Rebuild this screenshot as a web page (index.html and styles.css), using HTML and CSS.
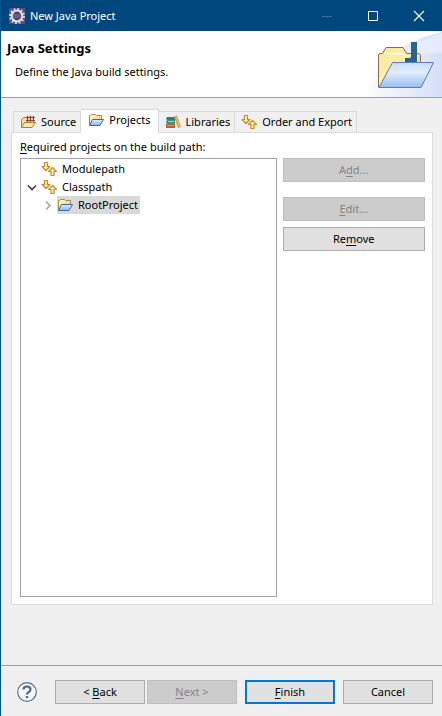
FILE: index.html
```html
<!DOCTYPE html>
<html lang="en">
<head>
<meta charset="utf-8">
<title>New Java Project</title>
<link rel="stylesheet" href="styles.css">
</head>
<body>
<svg class="defs" aria-hidden="true">
  <defs>
    <linearGradient id="gold" x1="0" y1="0" x2="1" y2="1"><stop offset="0" stop-color="#fffbe0"/><stop offset="1" stop-color="#efc65c"/></linearGradient>
    <linearGradient id="blue" x1="0" y1="0" x2="0" y2="1"><stop offset="0" stop-color="#e4f1fe"/><stop offset="1" stop-color="#86b3ee"/></linearGradient>
    <symbol id="arrows" viewBox="0 0 16 16">
      <g fill="#fff0b8" stroke="#c68d20" stroke-width="1.200" stroke-linejoin="round">
        <path d="M3.500 1.500h3v4H9L5 9.500 1 5.500h2.500z"/>
        <path d="M11.500 6.500l4 4H13v4h-3v-4H7.500z"/>
      </g>
    </symbol>
    <symbol id="folder" viewBox="0 0 16 16">
      <path d="M1.500 13V3.500h1l1-1h4l1 1h5V7" fill="url(#gold)" stroke="#b38a3c"/>
      <path d="M4.500 7.500h11l-3.500 6H1.500z" fill="url(#blue)" stroke="#4068b4" stroke-linejoin="round"/>
    </symbol>
  </defs>
</svg>
<div class="window">
  <header class="titlebar">
    <svg class="app-icon" viewBox="0 0 16 16" aria-hidden="true">
      <rect width="16" height="16" fill="#5a4a86"/>
      <circle cx="8" cy="8" r="7" fill="none" stroke="#d8d4d4" stroke-width="2" stroke-dasharray="2 1.660"/>
      <circle cx="8" cy="8" r="5.300" fill="#4b4470" stroke="#eeeae6" stroke-width="1.800"/>
      <path d="M4 7h8M4 9h8" stroke="#8279ac"/>
    </svg>
    <h1 class="window-title">New Java Project</h1>
    <button class="window-button" disabled aria-label="Minimize"><svg viewBox="0 0 12 12"><path d="M1 6.500h10" stroke="#37719f"/></svg></button>
    <button class="window-button" aria-label="Maximize"><svg viewBox="0 0 12 12"><path d="M1.500 1.500h9v9h-9z" fill="none" stroke="#fff"/></svg></button>
    <button class="window-button" aria-label="Close"><svg viewBox="0 0 12 12"><path d="M1 1l10 10M11 1L1 11" stroke="#fff" stroke-width="1.200"/></svg></button>
  </header>
  <section class="banner">
    <div class="banner-text">
      <h2>Java Settings</h2>
      <p>Define the Java build settings.</p>
    </div>
    <svg class="banner-art" viewBox="0 0 75 66" aria-hidden="true">
      <defs>
        <linearGradient id="haze" x1="0" y1="0" x2="1" y2="0"><stop offset="0" stop-color="#fbfcff"/><stop offset="1" stop-color="#d6dff7"/></linearGradient>
        <linearGradient id="case" x1="0" y1="0" x2="1" y2="1"><stop offset="0" stop-color="#f8e698"/><stop offset=".5" stop-color="#fcefae"/><stop offset="1" stop-color="#dcae4e"/></linearGradient>
        <linearGradient id="front" x1="0" y1="0" x2="0" y2="1"><stop offset="0" stop-color="#c8dcf8"/><stop offset=".4" stop-color="#e2edff"/><stop offset="1" stop-color="#98bdf2"/></linearGradient>
      </defs>
      <path d="M0 66C5 37 27 12 75 1v65z" fill="url(#haze)"/>
      <path d="M43 19Q57 7 75 2V22Q58 20 43 29z" fill="#e9effc" opacity=".7"/>
      <path d="M11.500 56.500v-32q0-2 2-2h2l3.500-6h17l3.500 6h12q2 0 2 2v10" fill="url(#case)" stroke="#8a6a50"/>
      <path d="M17 22.500h21" stroke="#fff8d0" stroke-width="2"/>
      <path d="M44 11h6v22H38v-6h5q1 0 1-2z" fill="#28638f"/>
      <path d="M25.500 31.500h41L54 56.500H12z" fill="url(#front)" stroke="#5f78c0" stroke-linejoin="round"/>
    </svg>
  </section>
  <main class="content">
    <div class="tabs" role="tablist">
      <button class="tab" role="tab" aria-selected="false">
        <svg class="icon" viewBox="0 0 16 16" aria-hidden="true"><path d="M1.500 13V5.500l2-2h4v3h6V9" fill="#f8dc98" stroke="#b17b38"/><path d="M4.500 8.500h11L12 13.500H1.500z" fill="#ffe7a8" stroke="#b17b38" stroke-linejoin="round"/><path d="M6.500 1.500h7v6h-7z" fill="#e3cbb0"/><path d="M6 3.500h9M6 6.500h9M7.500 2v6M10.500 2v6M13.500 2v6" stroke="#7b4b3e"/></svg>
        Source</button>
      <button class="tab tab-active" role="tab" aria-selected="true">
        <svg class="icon" aria-hidden="true"><use href="#folder"/></svg>
        Projects</button>
      <button class="tab" role="tab" aria-selected="false">
        <svg class="icon" viewBox="0 0 16 16" aria-hidden="true"><path d="M2 3h8v3H2L1 4.500z" fill="#287b9b"/><path d="M2 6h8v4H2L1 8z" fill="#2a9c78"/><path d="M3 7.500h6" stroke="#9bd8bd"/><path d="M1 10h9v4H1z" fill="#b56134"/><path d="M2 11.500h7" stroke="#da986d"/><path d="M9 2.500l3-1L16 13l-3 1z" fill="#e19a3c"/><path d="M11 3l3.500 10" stroke="#f4c36c"/></svg>
        Libraries</button>
      <button class="tab" role="tab" aria-selected="false">
        <svg class="icon" aria-hidden="true"><use href="#arrows"/></svg>
        Order and Export</button>
    </div>
    <section class="panel" role="tabpanel">
      <p class="panel-label" id="tree-label"><u>R</u>equired projects on the build path:</p>
      <div class="panel-body">
        <ul class="tree" role="tree" aria-labelledby="tree-label">
          <li class="row" role="treeitem"><span class="twisty"></span><svg class="icon" aria-hidden="true"><use href="#arrows"/></svg><span class="name">Modulepath</span></li>
          <li class="row" role="treeitem" aria-expanded="true"><svg class="twisty" viewBox="0 0 16 16" aria-hidden="true"><path d="M4 6.500l4 4 4-4" fill="none" stroke="#404040" stroke-width="1.600"/></svg><svg class="icon" aria-hidden="true"><use href="#arrows"/></svg><span class="name">Classpath</span></li>
          <li class="row row-child" role="treeitem" aria-expanded="false" aria-selected="true"><svg class="twisty" viewBox="0 0 16 16" aria-hidden="true"><path d="M6 4.500l4 4-4 4" fill="none" stroke="#a6a6a6" stroke-width="1.600"/></svg><span class="selected"><svg class="icon" aria-hidden="true"><use href="#folder"/></svg><span class="name">RootProject</span></span></li>
        </ul>
        <div class="actions">
          <button class="button button-add" disabled>A<u>d</u>d...</button>
          <button class="button" disabled><u>E</u>dit...</button>
          <button class="button">Re<u>m</u>ove</button>
        </div>
      </div>
    </section>
  </main>
  <footer class="footer">
    <button class="help" aria-label="Help"><svg viewBox="0 0 20 20"><circle cx="10" cy="10" r="9.300" fill="#f6f7fa" stroke="#5b6d92" stroke-width="1.200"/><path d="M6.500 7.500Q6.500 4.500 10 4.500t3.500 3q0 1.500-2 2.700-1.500.8-1.500 2.300" fill="none" stroke="#53658c" stroke-width="2.200"/><path d="M8.800 14h2.400v2.200H8.800z" fill="#53658c"/></svg></button>
    <div class="step-buttons">
      <button class="button">&lt; <u>B</u>ack</button>
      <button class="button" disabled><u>N</u>ext &gt;</button>
    </div>
    <button class="button button-default"><u>F</u>inish</button>
    <button class="button">Cancel</button>
  </footer>
</div>
</body>
</html>
```
FILE: styles.css
```css
* {
  box-sizing: border-box;
}

body {
  margin: 0;
  font: 11px/16px "Noto Sans", "Open Sans", sans-serif;
  color: #000;
  background: #f0f0f0;
}

h1, h2, p, ul {
  margin: 0;
  padding: 0;
}

button {
  font: inherit;
  color: inherit;
  padding: 0;
}

u {
  text-underline-offset: 2px;
}

.defs {
  position: absolute;
  width: 0;
  height: 0;
}

.icon {
  flex: none;
  width: 16px;
  height: 16px;
}

.window {
  display: flex;
  flex-direction: column;
  min-height: 100vh;
  border-left: 1px solid #005499;
}

.titlebar {
  display: flex;
  align-items: center;
  height: 31px;
  padding-left: 8px;
  color: #fff;
  background: #00477e;
}

.app-icon {
  width: 16px;
  height: 16px;
}

.window-title {
  flex: 1;
  margin-left: 5px;
  font-size: 11px;
  font-weight: 400;
}

.window-button {
  display: grid;
  place-items: center;
  width: 46px;
  height: 31px;
  border: 0;
  background: none;
}

.window-button svg {
  width: 12px;
  height: 12px;
}

.banner {
  display: flex;
  justify-content: space-between;
  height: 67px;
  background: #fff;
  border-bottom: 1px solid #a0a0a0;
}

.banner-text {
  padding: 9px 6px;
}

.banner-text h2 {
  font-size: 13px;
  line-height: 16px;
}

.banner-text p {
  margin: 8px 8px 0;
}

.banner-art {
  width: 75px;
  height: 66px;
}

.content {
  display: flex;
  flex: 1;
  flex-direction: column;
  padding: 11px 9px 60px 10px;
}

.tabs {
  display: flex;
  align-items: flex-end;
  padding-left: 2px;
}

.tab {
  display: flex;
  align-items: center;
  gap: 5px;
  height: 21px;
  padding: 0 4px 0 6px;
  border: 1px solid #d9d9d9;
  border-bottom: 0;
  border-left-width: 0;
  background: #f0f0f0;
  white-space: nowrap;
}

.tab:first-child {
  border-left-width: 1px;
}

.tab-active {
  z-index: 1;
  height: 24px;
  margin-bottom: -1px;
  padding: 0 7px 4px;
  background: #fff;
}

.panel {
  display: flex;
  flex: 1;
  flex-direction: column;
  padding: 6px 7px 7px 8px;
  border: 1px solid #dcdcdc;
  background: #fff;
}

.panel-body {
  display: grid;
  grid-template-columns: 9fr 5fr;
  flex: 1;
  gap: 6px;
  margin-top: 3px;
}

.tree {
  padding: 1px 3px;
  border: 1px solid #a0a3a8;
  list-style: none;
}

.row {
  display: flex;
  align-items: center;
  height: 18px;
}

.row-child {
  padding-left: 16px;
}

.twisty {
  width: 16px;
  height: 16px;
  margin-right: 1px;
}

.name {
  margin-left: 5px;
}

.selected {
  display: flex;
  align-items: center;
  height: 18px;
  padding-right: 2px;
  background: #d9d9d9;
}

.button {
  display: block;
  width: 100%;
  height: 24px;
  border: 1px solid #adadad;
  background: #e1e1e1;
}

.button:disabled {
  color: #838383;
  border-color: #bfbfbf;
  background: #ccc;
}

.actions .button {
  margin-bottom: 6px;
}

.actions .button-add {
  margin-bottom: 15px;
}

.footer {
  display: flex;
  align-items: center;
  gap: 8px;
  height: 51px;
  padding: 2px 9px 0 16px;
  border-top: 1px solid #a0a0a0;
}

.footer .button {
  width: 90px;
}

.step-buttons {
  display: flex;
  gap: 2px;
}

.help {
  width: 20px;
  height: 20px;
  margin-right: auto;
  border: 0;
  background: none;
}

.help svg {
  display: block;
}

.footer .button-default {
  border: 2px solid #0078d7;
}
```
